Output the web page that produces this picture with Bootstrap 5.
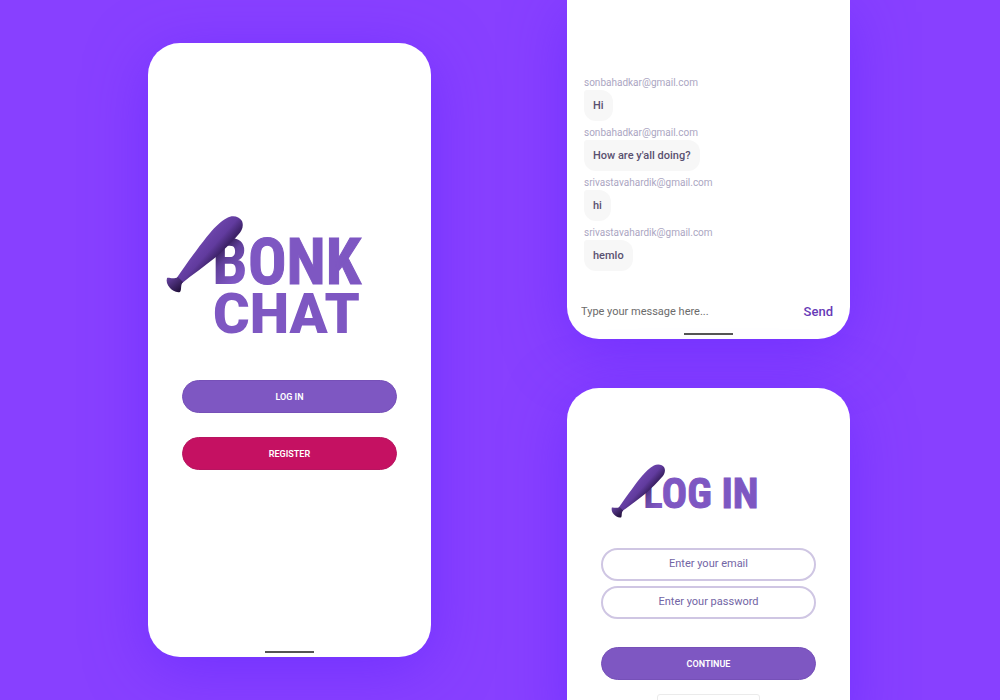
<!DOCTYPE html>
<html lang="en">
<head>
<meta charset="utf-8">
<meta name="viewport" content="width=device-width, initial-scale=1">
<title>Bonk Chat</title>
<link href="https://cdn.jsdelivr.net/npm/bootstrap@5.3.0/dist/css/bootstrap.min.css" rel="stylesheet">
<style>
  body { background: #8840ff; font-family: Roboto, "Liberation Sans", sans-serif; }
  .stage { display: grid; grid-template: 100% / 1fr 1fr; column-gap: 136px; padding: 0 150px 0 148px; }
  .phone { background: #fff; border-radius: 32px; box-shadow: 0 12px 60px rgba(94, 36, 255, .55); }
  .phone-home { margin-top: 43px; margin-bottom: 43px; padding: 167px 34px 4px; }
  .phone-chat { border-radius: 0 0 32px 32px; padding: 76px 17px 4px; }
  .phone-login { margin-top: 49px; padding: 70px 34px 0; border-radius: 32px 32px 0 0; height: 340px; }
  .logo-home { margin: 0 -22px 40px; }
  .logo-login { margin: 0 4px 25px; }
  .handle { width: 49px; height: 2px; background: #555; }
  .pill { height: 33px; border-radius: 17px; font-size: 9px; line-height: 29px; font-weight: 600; color: #fff; padding: 2px 0 0; }
  .pill:hover { color: #fff; }
  .pill-violet { background: #7e57c2; border: 1px solid #7650b8; }
  .pill-violet:hover { background: #7650b8; }
  .pill-rose { background: #c51162; border: 1px solid #b81460; }
  .pill-rose:hover { background: #b81460; }
  .gap-buttons { gap: 24px; }
  .sender { font-size: 10px; line-height: 14px; color: #aba6c2; }
  .bubble { background: #f7f7f7; color: #5a5170; font-size: 11px; line-height: 31px; font-weight: 500; padding: 0 9px; border-radius: 3px 12px 12px 12px; }
  .thread { gap: 5px; }
  .composer { margin: 30px 0 10px -3px; height: 22px; }
  .composer input { font-size: 11px; color: #333; min-width: 0; }
  .composer input::placeholder { color: #6b6b6b; opacity: 1; }
  .composer button { color: #673ab7; font-size: 13px; line-height: 22px; font-weight: 500; }
  .field { height: 33px; border: 2px solid #cfc6e3; border-radius: 17px; font-size: 11px; padding: 0 12px 2px; color: #5c4b94; }
  .field::placeholder { color: #7265a5; opacity: 1; }
  .fields { gap: 5px; margin-bottom: 28px; }
  .google-box { width: 103px; height: 30px; margin-top: 14px; border: 1px solid #ebebeb; border-radius: 3px; background: #fff; }
  .word { font-weight: 700; fill: #7e57c2; }
  .word-narrow { font-family: "Roboto Condensed", Roboto, sans-serif; stroke: #7e57c2; stroke-width: 1px; }
  .word-wide { font-family: Roboto, sans-serif; font-weight: 900; }
</style>
</head>
<body>
<svg width="0" height="0" class="position-absolute" aria-hidden="true">
  <defs>
    <linearGradient id="barrel" gradientUnits="userSpaceOnUse" x1="42" y1="27" x2="60" y2="43">
      <stop offset="0" stop-color="#6f47ae"/><stop offset=".6" stop-color="#613b9e"/><stop offset="1" stop-color="#3d2268"/>
    </linearGradient>
    <linearGradient id="knob" gradientUnits="userSpaceOnUse" x1="9" y1="68" x2="20" y2="82">
      <stop offset="0" stop-color="#62409a"/><stop offset="1" stop-color="#1f0e38"/>
    </linearGradient>
    <linearGradient id="shade" gradientUnits="userSpaceOnUse" x1="58" y1="38" x2="82" y2="62">
      <stop offset="0" stop-color="#311b52"/><stop offset=".4" stop-color="#61409b"/><stop offset="1" stop-color="#7e57c2"/>
    </linearGradient>
    <linearGradient id="shade-small" gradientUnits="userSpaceOnUse" x1="38" y1="26" x2="56" y2="44">
      <stop offset="0" stop-color="#311b52"/><stop offset=".5" stop-color="#61409b"/><stop offset="1" stop-color="#7e57c2"/>
    </linearGradient>
    <g id="bat">
      <path fill="url(#barrel)" d="M67 8C72 5 79 6 82 11C84 16 82 21 78 25C72 32 64 40 56 47C45 56 33 64 21 74L16 69C23 59 29 50 36 41C41 34 45 29 50 23C55 17 61 11 67 8Z"/>
      <path fill="url(#knob)" d="M7 68C9 67 13 70 18 67L23 72C20 75 22 80 20 82C16 83 12 80 10 78C7 75 6 71 7 68Z"/>
    </g>
  </defs>
</svg>

<main class="stage vh-100 overflow-hidden">
  <section class="phone phone-home d-flex flex-column">
    <svg class="logo-home" width="210" height="130" viewBox="0 0 210 130" role="img" aria-label="Bonk Chat">
      <text class="word word-narrow" x="52" y="74" font-size="64"><tspan fill="url(#shade)" stroke="none">B</tspan>ONK</text>
      <text class="word word-wide" x="53" y="123" font-size="56">CHAT</text>
      <use href="#bat"/>
    </svg>
    <div class="d-flex flex-column gap-buttons">
      <button type="button" class="btn pill pill-violet w-100">LOG IN</button>
      <button type="button" class="btn pill pill-rose w-100">REGISTER</button>
    </div>
    <div class="handle mt-auto mx-auto"></div>
  </section>

  <div class="d-flex flex-column">
    <section class="phone phone-chat">
      <div class="d-flex flex-column thread">
        <div><div class="sender">sonbahadkar@gmail.com</div><div class="bubble d-table">Hi</div></div>
        <div><div class="sender">sonbahadkar@gmail.com</div><div class="bubble d-table">How are y'all doing?</div></div>
        <div><div class="sender">srivastavahardik@gmail.com</div><div class="bubble d-table">hi</div></div>
        <div><div class="sender">srivastavahardik@gmail.com</div><div class="bubble d-table">hemlo</div></div>
      </div>
      <form class="composer d-flex align-items-center">
        <input type="text" class="flex-grow-1 border-0 p-0 bg-transparent" placeholder="Type your message here..." aria-label="Message">
        <button type="button" class="btn p-0 border-0">Send</button>
      </form>
      <div class="handle mx-auto"></div>
    </section>

    <section class="phone phone-login flex-shrink-0">
      <svg class="logo-login d-block" width="165" height="65" viewBox="0 0 165 65" role="img" aria-label="Log in">
        <text class="word word-narrow" x="38" y="50" font-size="42"><tspan fill="url(#shade-small)" stroke="none">L</tspan>OG IN</text>
        <use href="#bat" transform="translate(2 2) scale(.7)"/>
      </svg>
      <form>
        <div class="fields d-flex flex-column">
          <input type="email" class="field w-100 text-center" placeholder="Enter your email" aria-label="Email">
          <input type="password" class="field w-100 text-center" placeholder="Enter your password" aria-label="Password">
        </div>
        <button type="button" class="btn pill pill-violet w-100">CONTINUE</button>
      </form>
      <div class="google-box mx-auto"></div>
    </section>
  </div>
</main>
<script src="https://cdn.jsdelivr.net/npm/bootstrap@5.3.0/dist/js/bootstrap.bundle.min.js"></script>
</body>
</html>
